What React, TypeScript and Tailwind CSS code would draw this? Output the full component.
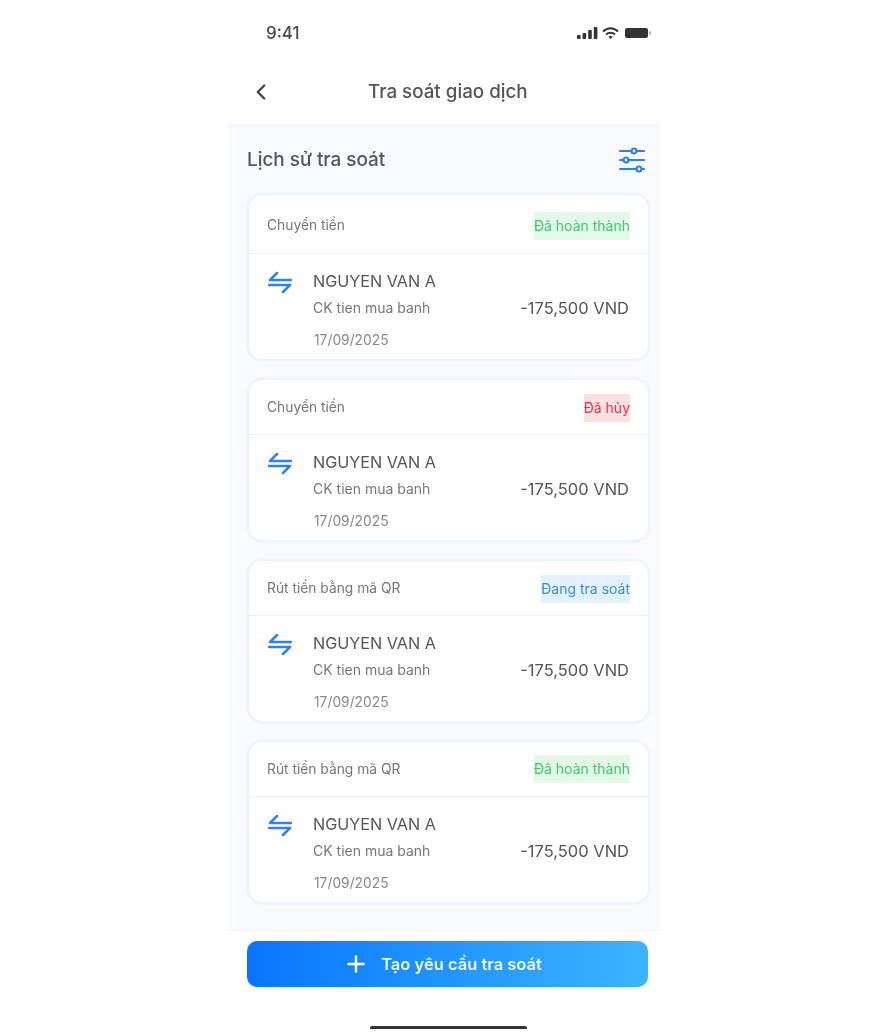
import { ChevronLeft, Plus } from "lucide-react";

const items = [
  { type: "Chuyển tiền", status: "Đã hoàn thành", tone: "bg-[#e3f8e9] text-[#3ccb6c]", head: "h-[59px] pt-[3px]" },
  { type: "Chuyển tiền", status: "Đã hủy", tone: "bg-[#fde0e2] text-[#ee3344]", head: "h-[55px] pt-[1px]" },
  { type: "Rút tiền bằng mã QR", status: "Đang tra soát", tone: "bg-[#e2f1fc] text-[#3a8fd8]", head: "h-[55px] pt-[1px]" },
  { type: "Rút tiền bằng mã QR", status: "Đã hoàn thành", tone: "bg-[#e3f8e9] text-[#3ccb6c]", head: "h-[55px]" },
];

function SwapIcon() {
  return (
    <svg width="24" height="24" viewBox="0 0 24 24" fill="none" stroke="#2f80f2" strokeWidth="2.5" strokeLinecap="round" strokeLinejoin="round">
      <path d="M9 3 L2 10 H23" />
      <path d="M1 15 H22 L15 22" />
    </svg>
  );
}

function FilterIcon() {
  return (
    <svg width="26" height="26" viewBox="0 0 26 26" fill="none" stroke="#2f80f2" strokeWidth="2.2" strokeLinecap="round">
      <path d="M1 4 H12.5 M17.5 4 H25" />
      <circle cx="15" cy="4" r="2.5" />
      <path d="M1 13 H4.5 M9.5 13 H25" />
      <circle cx="7" cy="13" r="2.5" />
      <path d="M1 22 H17.5 M22.5 22 H25" />
      <circle cx="20" cy="22" r="2.5" />
    </svg>
  );
}

function StatusIcons() {
  return (
    <div className="flex items-center gap-[4px]">
      <svg width="21" height="12" viewBox="0 0 21 12" fill="#333">
        <rect x="0" y="8" width="3.6" height="4" rx="1" />
        <rect x="5.6" y="6" width="3.6" height="6" rx="1" />
        <rect x="11.2" y="3" width="3.6" height="9" rx="1" />
        <rect x="16.8" y="0" width="3.6" height="12" rx="1" />
      </svg>
      <svg width="17" height="12" viewBox="0 0 17 12" fill="none" stroke="#333" strokeWidth="2">
        <path d="M1 4.5 C5.5 0.2 11.5 0.2 16 4.5" />
        <path d="M4 7.5 C6.5 5.2 10.5 5.2 13 7.5" />
        <path d="M8.5 12 L6.3 9.8 C7.5 8.8 9.5 8.8 10.7 9.8 Z" fill="#333" stroke="none" />
      </svg>
      <div className="ml-[2px] flex items-center gap-px">
        <div className="w-[23px] h-[10px] rounded-[2px] bg-[#333]" />
        <div className="w-[2px] h-[4px] rounded-r bg-[#aaa]" />
      </div>
    </div>
  );
}

export default function App() {
  return (
    <div className="w-[869px] h-[1035px] overflow-hidden bg-white font-['Inter',sans-serif] flex justify-start blur-[0.5px]">
      <div className="ml-[228px] w-[432px] h-full flex flex-col">
        <div className="h-[66px] pl-[38px] pr-[9px] flex items-center justify-between">
          <span className="mt-[2px] text-[17px] font-medium text-[#4a4a4a]">9:41</span>
          <StatusIcons />
        </div>

        <div className="h-[52px] px-[20px] flex items-center relative">
          <ChevronLeft size={26} strokeWidth={2.2} className="text-[#444]" />
          <span className="absolute left-[140px] text-[18.8px] font-medium text-[#555]">Tra soát giao dịch</span>
        </div>

        <div className="mt-[6px] h-[807px] bg-[#f8faff] border-t-[3px] border-[#f0f5fe] border-b border-b-[#f2f4f8] px-[19px]">
          <div className="w-[398px] h-[66px] flex items-center justify-between">
            <span className="text-[18.9px] font-medium text-[#555]">Lịch sử tra soát</span>
            <FilterIcon />
          </div>

          <div className="w-[403px] flex flex-col gap-[17px]">
            {items.map((item, i) => (
              <div key={i} className="bg-white rounded-[16px] border-2 border-[#edf3ff] shadow-[0_0_2px_#dfe9fd]">
                <div className={`${item.head} flex items-center justify-between px-[18px] border-b border-[#f0f0f2]`}>
                  <span className="text-[13.8px] text-[#777]">{item.type}</span>
                  <span className={`h-[28px] leading-[28px] text-[14px] ${item.tone}`}>{item.status}</span>
                </div>
                <div className="h-[105px] pl-[19px] pr-[19px] pt-[14px] flex">
                  <div className="w-[45px] pt-[2px]">
                    <SwapIcon />
                  </div>
                  <div className="flex-1">
                    <div className="text-[16.2px] leading-[26px] text-[#555]">NGUYEN VAN A</div>
                    <div className="mt-[2px] text-[14px] leading-[24px] text-[#777]">CK tien mua banh</div>
                    <div className="mt-[8px] ml-[1px] text-[13.8px] leading-[24px] text-[#888]">17/09/2025</div>
                  </div>
                  <div className="pt-[27px] text-[16.5px] leading-[26px] text-[#555]">-175,500 VND</div>
                </div>
              </div>
            ))}
          </div>
        </div>

        <div className="mt-[10px] ml-[19px] w-[401px] h-[46px] rounded-[10px] bg-gradient-to-r from-[#0b74ff] to-[#3cb4fe] flex items-center justify-center gap-[12px] pr-[10px]">
          <Plus size={26} strokeWidth={2.2} className="text-white" />
          <span className="text-[16.5px] font-semibold text-[#eef6ff]">Tạo yêu cầu tra soát</span>
        </div>

        <div className="mt-auto mb-[6px] ml-[142px] w-[157px] h-[3px] rounded-t-[2px] bg-[#333]" />
      </div>
    </div>
  );
}
